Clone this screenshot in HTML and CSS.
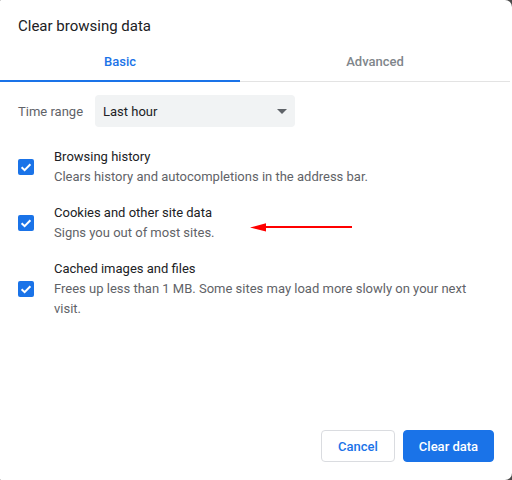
FILE: index.html
```html
<!DOCTYPE html>
<html lang="en">

<head>
  <meta charset="UTF-8">
  <meta name="viewport" content="width=device-width, initial-scale=1.0">
  <title>Clear browsing data</title>

  <link rel="stylesheet" href="styles.css">
</head>

<body>
  <div class="dialog">
    <div class="dialog_title">Clear browsing data</div>

    <!-- tabs -->
    <div class="tabs">
      <div class="tab active">Basic</div>
      <div class="tab">Advanced</div>
    </div>

    <!-- time range -->
    <div class="range_row">
      <span class="range_label">Time range</span>
      <div class="select">
        <span>Last hour</span>
        <span class="select_arrow"></span>
      </div>
    </div>

    <!-- options -->
    <div class="options">
      <div class="option">
        <div class="checkbox">
          <svg viewBox="0 0 16 16" width="16" height="16">
            <path d="M3.6 8.2 L6.6 11.1 L12.4 5.2" fill="none" stroke="#fff" stroke-width="2" />
          </svg>
        </div>
        <div class="option_text">
          <div class="option_name">Browsing history</div>
          <div class="option_desc">Clears history and autocompletions in the address bar.</div>
        </div>
      </div>
      <div class="option">
        <div class="checkbox">
          <svg viewBox="0 0 16 16" width="16" height="16">
            <path d="M3.6 8.2 L6.6 11.1 L12.4 5.2" fill="none" stroke="#fff" stroke-width="2" />
          </svg>
        </div>
        <div class="option_text">
          <div class="option_name">Cookies and other site data</div>
          <div class="option_desc">Signs you out of most sites.</div>
        </div>
        <!-- red pointer -->
        <svg class="pointer" viewBox="0 0 104 12" width="104" height="12">
          <line x1="12" y1="6" x2="103" y2="6" stroke="#f00" stroke-width="2.2" />
          <polygon points="1,6.5 17,2.2 17,10.6" fill="#f00" />
        </svg>
      </div>
      <div class="option">
        <div class="checkbox">
          <svg viewBox="0 0 16 16" width="16" height="16">
            <path d="M3.6 8.2 L6.6 11.1 L12.4 5.2" fill="none" stroke="#fff" stroke-width="2" />
          </svg>
        </div>
        <div class="option_text">
          <div class="option_name">Cached images and files</div>
          <div class="option_desc">Frees up less than 1 MB. Some sites may load more slowly on your next visit.</div>
        </div>
      </div>
    </div>

    <!-- buttons -->
    <div class="actions">
      <button class="btn cancel">Cancel</button>
      <button class="btn primary">Clear data</button>
    </div>
  </div>
</body>

</html>
```

FILE: styles.css
```css
* {
  margin: 0;
  padding: 0;
  box-sizing: border-box;
}

body {
  width: 512px;
  height: 480px;
  background: #4a4a4a;
  font-family: Roboto, 'Noto Sans', sans-serif;
  font-size: 13px;
  color: #202124;
  overflow: hidden;
}

.dialog {
  position: relative;
  display: flex;
  flex-direction: column;
  width: 512px;
  height: 480px;
  background: #fff;
  border-radius: 1px 7px 7px 1px;
}

.dialog_title {
  padding: 16px 18px 0;
  font-size: 15px;
  line-height: 20px;
}

/* tabs */
.tabs {
  display: flex;
  margin-top: 6px;
  margin-right: 2px;
}

.tab {
  flex: 1;
  height: 40px;
  line-height: 40px;
  text-align: center;
  font-weight: 500;
  color: #80868b;
  box-shadow: inset 0 -1px #e3e3e3;
}

.tab.active {
  flex: none;
  width: 240px;
  color: #1a73e8;
  box-shadow: inset 0 -2px #1a73e8;
}

/* time range */
.range_row {
  display: flex;
  align-items: center;
  margin-top: 13px;
  padding-left: 18px;
}

.range_label {
  width: 77px;
  color: #5f6368;
}

.select {
  display: flex;
  align-items: center;
  justify-content: space-between;
  width: 200px;
  height: 32px;
  padding: 0 8px;
  background: #f1f3f4;
  border-radius: 4px;
}

.select_arrow {
  width: 0;
  height: 0;
  border-left: 5px solid transparent;
  border-right: 5px solid transparent;
  border-top: 5px solid #5f6368;
}

/* options */
.options {
  display: flex;
  flex-direction: column;
  gap: 16px;
  margin-top: 20px;
  padding: 0 30px 0 18px;
}

.option {
  position: relative;
  display: flex;
  align-items: center;
  gap: 20px;
  line-height: 20px;
}

.checkbox {
  flex: none;
  width: 16px;
  height: 16px;
  background: #1a73e8;
  border-radius: 2px;
}

.checkbox svg {
  display: block;
}

.option_desc {
  color: #5f6368;
}

.pointer {
  position: absolute;
  left: 231px;
  top: 18px;
}

/* buttons */
.actions {
  display: flex;
  justify-content: flex-end;
  gap: 8px;
  margin-top: auto;
  padding: 0 18px 18px;
}

.btn {
  height: 32px;
  padding: 0;
  border-radius: 4px;
  font-family: inherit;
  font-size: 13px;
  font-weight: 500;
  white-space: nowrap;
}

.cancel {
  width: 74px;
  background: #fff;
  border: 1px solid #dadce0;
  color: #1a73e8;
}

.primary {
  width: 91px;
  background: #1a73e8;
  border: 1px solid #1a73e8;
  color: #fff;
}
```
